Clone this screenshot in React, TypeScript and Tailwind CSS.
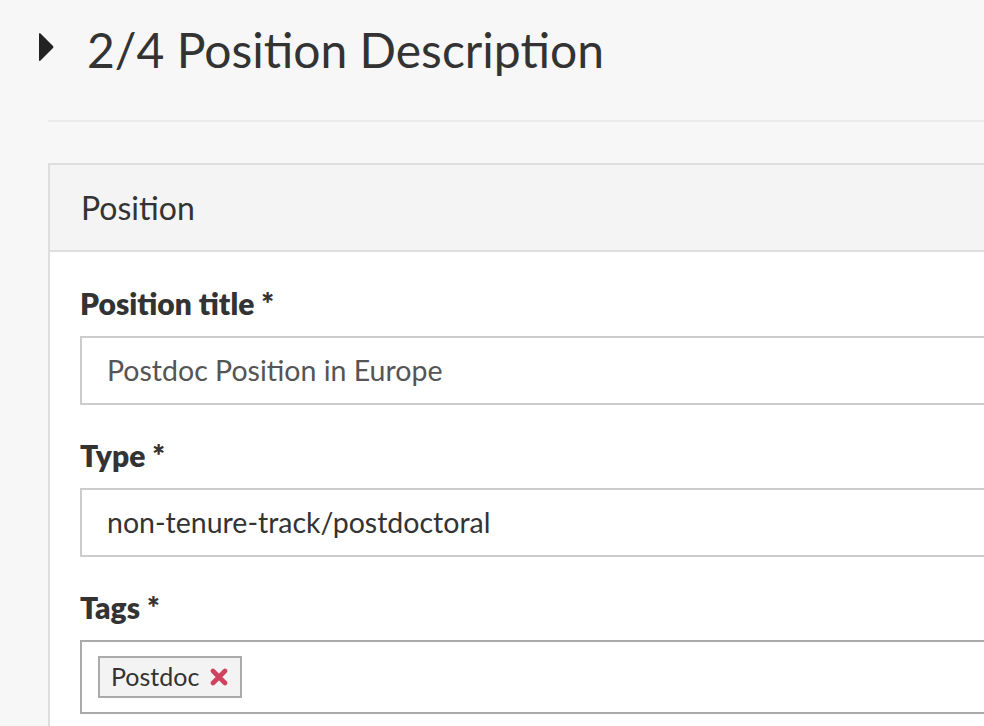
const font = { fontFamily: 'Lato, "Open Sans", sans-serif' };

const Field = ({ label, children }: { label: string; children: React.ReactNode }) => (
    <div className="mb-[35px]">
        <label className="mb-[18px] block text-[30px] font-extrabold leading-none text-[#333]">{label}</label>
        {children}
    </div>
);

// font-awesome style "times" glyph
const TimesIcon = () => (
    <svg width="18" height="18" viewBox="0 0 18 18" className="shrink-0">
        <path d="M3 3 L15 15 M15 3 L3 15" stroke="#d0435e" strokeWidth="4.6" strokeLinecap="round" />
    </svg>
);

export default function App() {
    return (
        <div className="min-h-screen w-full overflow-hidden bg-[#f7f7f7] pl-[48px] pt-[22px]" style={font}>
            <div className="-ml-[9px] flex items-center gap-[33px]">
                <svg width="15" height="30" viewBox="0 0 15 30" className="-mt-[6px] shrink-0">
                    <path d="M1.5 1.5 L14 14 Q15 15 14 16 L1.5 28.5 Q0 30 0 27.5 L0 2.5 Q0 0 1.5 1.5 Z" fill="#222" />
                </svg>
                <h1 className="text-[48px] leading-[56px] text-[#333]">2/4 Position Description</h1>
            </div>

            <hr className="mt-[42px] border-0 border-t-2 border-[#ebebeb]" />

            <div className="mt-[41px] w-[1000px] border-2 border-[#dedede] bg-white">
                <div className="flex h-[87px] items-center border-b-2 border-[#dedede] bg-[#f4f4f4] px-[31px]">
                    <span className="text-[32px] text-[#333]">Position</span>
                </div>

                <div className="px-[30px] pt-[36px]">
                    <Field label="Position title *">
                        <div className="flex h-[69px] items-center border-2 border-[#cccccc] bg-white px-[25px] text-[28.5px] text-[#555]">
                            Postdoc Position in Europe
                        </div>
                    </Field>

                    <Field label="Type *">
                        <div className="flex h-[69px] items-center border-2 border-[#cccccc] bg-white px-[25px] text-[28.5px] text-[#333]">
                            non-tenure-track/postdoctoral
                        </div>
                    </Field>

                    <Field label="Tags *">
                        <div className="flex h-[74px] items-center border-2 border-[#aaaaaa] bg-white px-[16px]">
                            <span className="flex h-[42px] items-center gap-[11px] border-2 border-[#aaaaaa] bg-[#f3f3f3] pl-[11px] pr-[12px] text-[25px] text-[#333]">
                                Postdoc
                                <TimesIcon />
                            </span>
                        </div>
                    </Field>
                </div>
            </div>
        </div>
    );
}
